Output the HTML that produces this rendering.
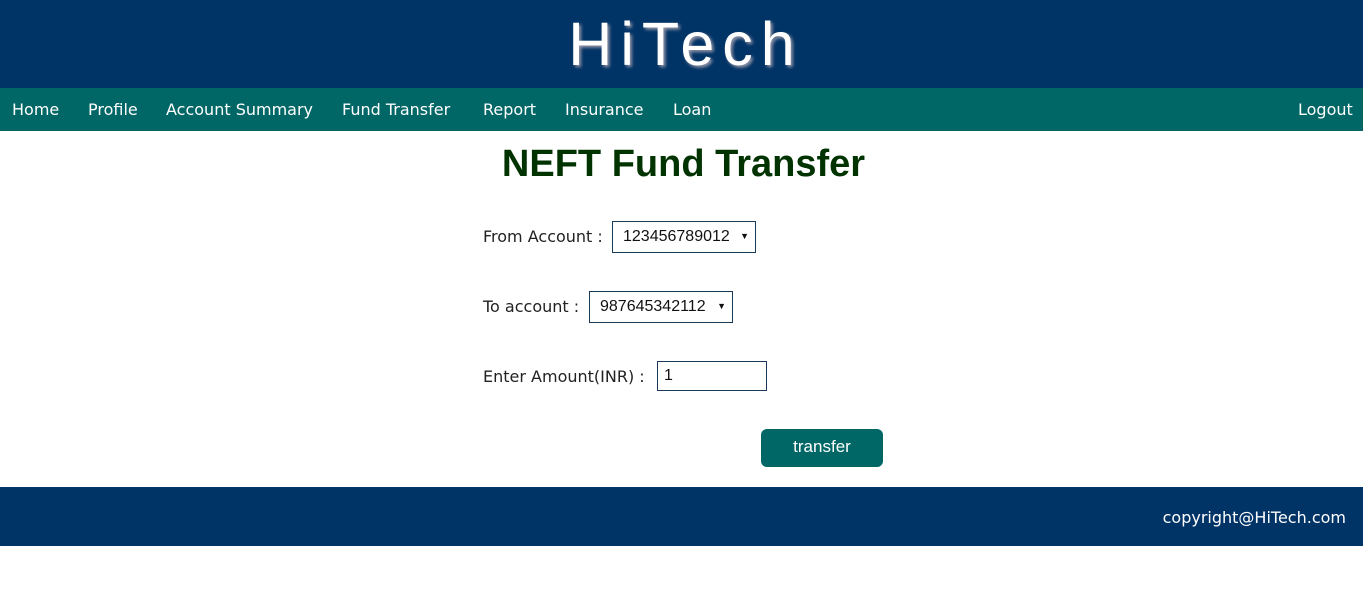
<!DOCTYPE html>
<html><head><style>
*{margin:0;padding:0;box-sizing:border-box}
body{width:1363px;height:605px;background:#fff;position:relative;font-family:"DejaVu Sans",Verdana,sans-serif;overflow:hidden}
.hdr{position:absolute;left:0;top:0;width:1363px;height:88px;background:#003366}
.logo{position:absolute;left:0;width:1363px;top:8px;text-align:center;color:#fff;font-family:"Liberation Sans",Arial,sans-serif;font-size:61px;letter-spacing:8px;padding-left:8px;text-shadow:2px 2px 3px #99a;line-height:72px}
.nav{position:absolute;left:0;top:88px;width:1363px;height:43px;background:#006666;color:#fff;font-size:16px}
.nav span{position:absolute;top:12px;white-space:nowrap}
h1{position:absolute;left:0;width:1363px;top:142px;text-align:center;font-family:"Liberation Sans",Arial,sans-serif;font-size:38px;font-weight:bold;color:#003300;line-height:44px;padding-left:4px}
.lbl{position:absolute;left:483px;font-size:16px;color:#222;white-space:nowrap}
.box{position:absolute;border:1px solid #1a3a5a;font-family:"Liberation Sans",Arial,sans-serif;font-size:16px;color:#111;padding:6px 0 0 10px}
.box i{position:absolute;right:6px;top:9px;font-style:normal;font-size:9px}
.btn{position:absolute;left:761px;top:429px;width:122px;height:38px;background:#006666;border-radius:6px;color:#fff;font-family:"Liberation Sans",Arial,sans-serif;font-size:17px;text-align:center;line-height:36px}
.ftr{position:absolute;left:0;top:487px;width:1363px;height:59px;background:#003366;color:#fff;font-size:16px}
.ftr span{position:absolute;right:17px;top:21px}
</style></head><body>
<div class="hdr"><div class="logo">HiTech</div></div>
<div class="nav">
<span style="left:12px">Home</span>
<span style="left:88px">Profile</span>
<span style="left:166px">Account Summary</span>
<span style="left:342px">Fund Transfer</span>
<span style="left:483px">Report</span>
<span style="left:565px">Insurance</span>
<span style="left:673px">Loan</span>
<span style="left:1298px">Logout</span>
</div>
<h1>NEFT Fund Transfer</h1>
<div class="lbl" style="top:227px">From Account :</div>
<div class="box" style="left:612px;top:221px;width:144px;height:32px">123456789012<i>▼</i></div>
<div class="lbl" style="top:297px">To account :</div>
<div class="box" style="left:589px;top:291px;width:144px;height:32px">987645342112<i>▼</i></div>
<div class="lbl" style="top:367px">Enter Amount(INR) :</div>
<div class="box" style="left:657px;top:361px;width:110px;height:30px;padding:5px 0 0 6px">1</div>
<div class="btn">transfer</div>
<div class="ftr"><span>copyright@HiTech.com</span></div>
</body></html>
